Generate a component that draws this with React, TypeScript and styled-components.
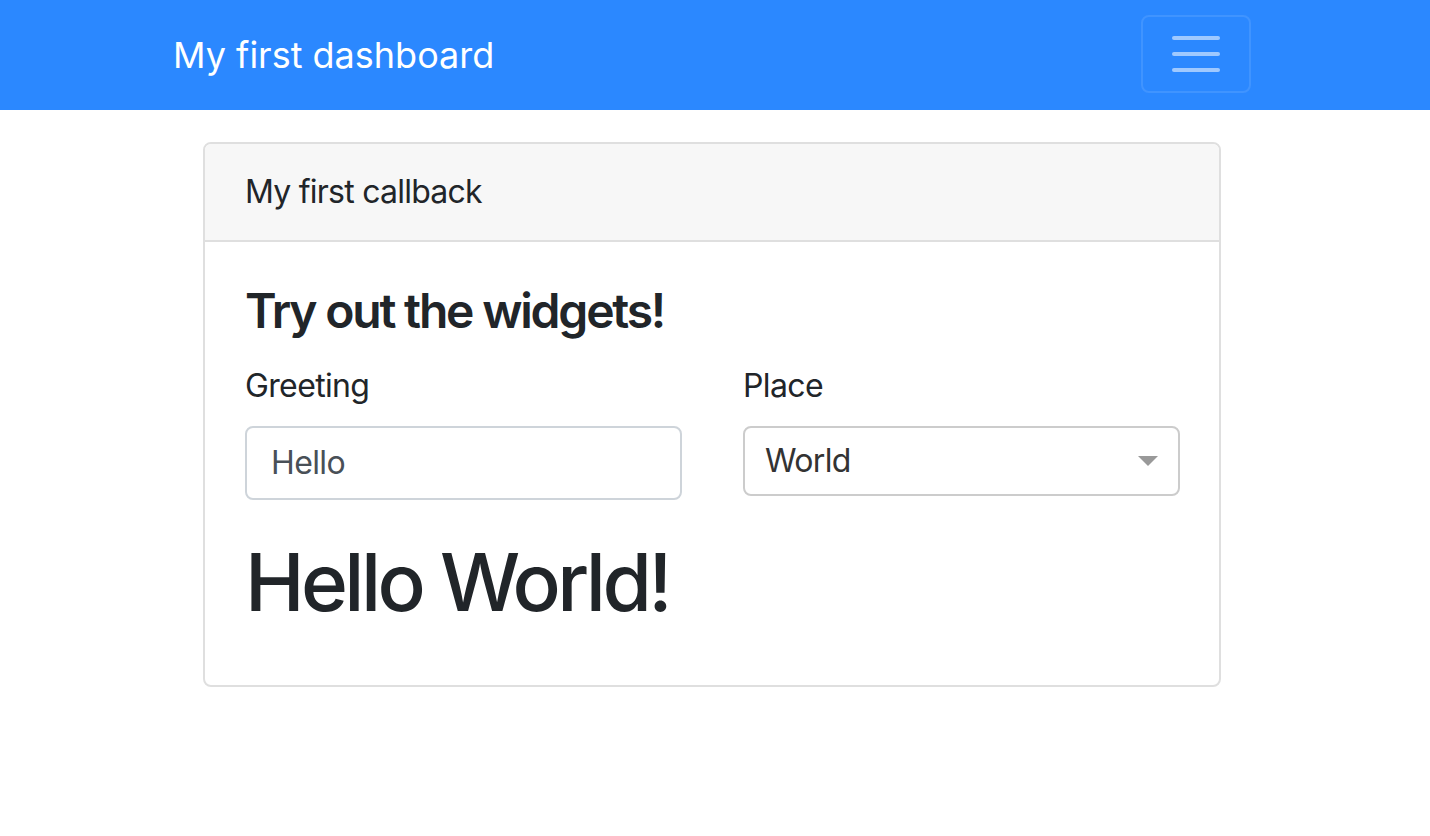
import React from "react";
import styled, { createGlobalStyle } from "styled-components";

const GlobalStyle = createGlobalStyle`
  html, body {
    margin: 0;
    padding: 0;
    background: #ffffff;
  }
  body {
    font-family: Inter, "Noto Sans", "Liberation Sans", sans-serif;
    color: #212529;
    -webkit-font-smoothing: antialiased;
  }
  * { box-sizing: border-box; }
`;

const Page = styled.div`
  padding-right: 6px;
`;

const Navbar = styled.nav`
  height: 110px;
  background: #2b88ff;
  margin-right: -6px;
  padding-right: 6px;
`;

const Container = styled.div`
  width: 1078px;
  margin: 0 auto;
`;

const NavInner = styled(Container)`
  height: 100%;
  display: flex;
  align-items: center;
  justify-content: space-between;
`;

const Brand = styled.a`
  font-size: 36px;
  line-height: 54px;
  color: #ffffff;
  text-decoration: none;
  margin-top: -1px;
`;

const Toggler = styled.button`
  width: 110px;
  height: 78px;
  margin-top: -2px;
  background: transparent;
  border: 2px solid rgba(255, 255, 255, 0.1);
  border-radius: 8px;
  display: flex;
  align-items: center;
  justify-content: center;
  padding: 0;
  cursor: pointer;
`;

const Card = styled.section`
  margin: 32px 30px 0;
  border: 2px solid #dfdfdf;
  border-radius: 8px;
  overflow: hidden;
`;

const CardHeader = styled.header`
  background: #f7f7f7;
  border-bottom: 2px solid #dfdfdf;
  padding: 24px 40px;
  font-size: 32px;
  line-height: 48px;
  letter-spacing: -0.024em;
`;

const CardBody = styled.div`
  padding: 40px 39px 40px 40px;
`;

const Heading = styled.h4`
  margin: 0 0 22px;
  font-size: 48px;
  line-height: 57.6px;
  font-weight: 600;
  letter-spacing: -0.046em;
`;

const Row = styled.div`
  display: grid;
  grid-template-columns: 437px 437px;
  column-gap: 61px;
  align-items: start;
  margin-bottom: 34px;
`;

const Field = styled.div`
  display: flex;
  flex-direction: column;
`;

const Label = styled.label`
  font-size: 32px;
  line-height: 48px;
  margin-bottom: 16px;
  letter-spacing: -0.02em;
`;

const TextInput = styled.input`
  height: 74px;
  width: 100%;
  border: 2px solid #ced4da;
  border-radius: 8px;
  padding: 0 24px;
  font-family: inherit;
  font-size: 32px;
  letter-spacing: -0.02em;
  color: #495057;
  background: #ffffff;
  outline: none;
`;

const SelectBox = styled.div`
  height: 70px;
  border: 2px solid #cccccc;
  border-radius: 8px;
  display: flex;
  align-items: center;
  justify-content: space-between;
  padding: 0 20px 0 20px;
  background: #ffffff;
  cursor: default;
`;

const SelectValue = styled.span`
  font-size: 32px;
  letter-spacing: -0.02em;
  color: #333333;
`;

const Result = styled.h1`
  margin: 0 0 15px;
  font-size: 80px;
  line-height: 96px;
  font-weight: 500;
  letter-spacing: -0.045em;
`;

const ToggleIcon = () => (
  <svg width="48" height="36" viewBox="0 0 48 36" aria-hidden="true">
    <g stroke="rgba(255,255,255,0.55)" strokeWidth="4" strokeLinecap="round">
      <line x1="2" y1="2" x2="46" y2="2" />
      <line x1="2" y1="18" x2="46" y2="18" />
      <line x1="2" y1="34" x2="46" y2="34" />
    </g>
  </svg>
);

const Caret = () => (
  <svg width="20" height="10" viewBox="0 0 20 10" aria-hidden="true">
    <polygon points="0,0 20,0 10,10" fill="#999999" />
  </svg>
);

export default function App() {
  return (
    <>
      <GlobalStyle />
      <Page>
        <Navbar>
          <NavInner>
            <Brand href="#">My first dashboard</Brand>
            <Toggler aria-label="Toggle navigation">
              <ToggleIcon />
            </Toggler>
          </NavInner>
        </Navbar>
        <Container>
          <Card>
            <CardHeader>My first callback</CardHeader>
            <CardBody>
              <Heading>Try out the widgets!</Heading>
              <Row>
                <Field>
                  <Label htmlFor="greeting">Greeting</Label>
                  <TextInput id="greeting" defaultValue="Hello" />
                </Field>
                <Field>
                  <Label>Place</Label>
                  <SelectBox>
                    <SelectValue>World</SelectValue>
                    <Caret />
                  </SelectBox>
                </Field>
              </Row>
              <Result>Hello World!</Result>
            </CardBody>
          </Card>
        </Container>
      </Page>
    </>
  );
}
